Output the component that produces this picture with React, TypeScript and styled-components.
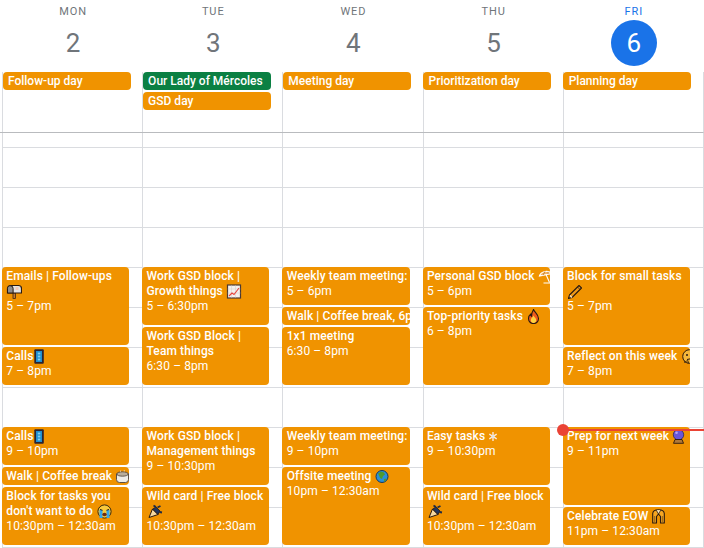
import React from "react";
import styled, { createGlobalStyle } from "styled-components";

const Global = createGlobalStyle`
  html, body { margin: 0; padding: 0; background: #fff; }
  body { font-family: Roboto, "Liberation Sans", sans-serif; }
`;

const Page = styled.div`
  width: 704px;
  height: 548px;
  overflow: hidden;
  background: #fff;
`;

const Columns = styled.div`
  display: grid;
  grid-template-columns: repeat(5, 140.2px);
  padding-left: 1.95px;
  width: 702.95px;
  box-sizing: border-box;
`;

const HeaderRow = styled(Columns)`
  height: 72px;
`;

const HeaderCell = styled.div`
  display: flex;
  flex-direction: column;
  align-items: center;
  padding: 4px 0 0 2px;
`;

const DayName = styled.div<{ $today?: boolean }>`
  font-size: 11px;
  font-weight: 400;
  line-height: 15px;
  letter-spacing: 0.9px;
  color: ${(p) => (p.$today ? "#1a73e8" : "#70757a")};
`;

const DayNumber = styled.div<{ $today?: boolean }>`
  width: 46px;
  height: 46px;
  margin-top: 1px;
  border-radius: 50%;
  display: flex;
  align-items: center;
  justify-content: center;
  font-size: 26px;
  color: ${(p) => (p.$today ? "#fff" : "#70757a")};
  background: ${(p) => (p.$today ? "#1a73e8" : "transparent")};
`;

const AllDayRow = styled(Columns)`
  height: 61px;
  border-right: 1px solid #dadce0;
  border-bottom: 1px solid #b9bbbe;
  width: 704px;
`;

const AllDayCell = styled.div`
  display: flex;
  flex-direction: column;
  gap: 2px;
  padding-left: 0.6px;
  background: linear-gradient(90deg, #dadce0 1px, transparent 1px);
`;

const Chip = styled.div<{ $green?: boolean }>`
  width: 128px;
  height: 18px;
  box-sizing: border-box;
  padding-left: 5.4px;
  border-radius: 4px;
  background: ${(p) => (p.$green ? "#0b8043" : "#f09300")};
  color: #fff;
  font-size: 12px;
  font-weight: 500;
  line-height: 18px;
  white-space: nowrap;
  overflow: hidden;
`;

const TimeGrid = styled(Columns)`
  height: 415px;
  width: 704px;
  border-right: 1px solid #dadce0;
`;

const DayColumn = styled.div`
  position: relative;
  display: grid;
  grid-template-rows: 14px repeat(21, 20px);
  background:
    linear-gradient(90deg, #dadce0 1px, transparent 1px) 0 0 / 100% 100% no-repeat,
    linear-gradient(#dadce0 1px, transparent 1px) 0 14px / 100% 40px repeat-y;
`;

const EventCard = styled.div<{ $start: number; $span: number }>`
  grid-row: ${(p) => p.$start} / span ${(p) => p.$span};
  margin: 0 13px 2px 0;
  padding: 2px 0 0 4.4px;
  box-sizing: border-box;
  border-radius: 4px;
  background: #f09300;
  color: #fff;
  font-size: 12px;
  line-height: 15px;
  overflow: hidden;
`;

const EventTitle = styled.div<{ $nowrap: boolean }>`
  font-weight: 500;
  letter-spacing: 0.1px;
  white-space: ${(p) => (p.$nowrap ? "nowrap" : "normal")};
`;

const EventTime = styled.div`
  font-weight: 400;
  letter-spacing: 0.1px;
  white-space: nowrap;
`;

const NowDot = styled.div`
  position: absolute;
  left: -6px;
  top: 291px;
  width: 12px;
  height: 12px;
  border-radius: 50%;
  background: #ea4335;
`;

const NowLine = styled.div`
  position: absolute;
  left: 0;
  right: -2px;
  top: 296px;
  height: 2px;
  background: #ea4335;
`;

const Glyph = styled.svg`
  display: inline-block;
  width: 16px;
  height: 15px;
  vertical-align: top;
`;

const ink = "#2a1a10";
const icons: Record<string, React.ReactNode> = {
  mailbox: (
    <>
      <rect x="6.500" y="9" width="2.500" height="5.500" fill="#c77a2c" stroke={ink} strokeWidth="0.7" />
      <path d="M1 4.500a3 3 0 0 1 3-3h8a3 3 0 0 1 3 3V9H1z" fill="#e4e4e4" stroke={ink} strokeWidth="1.200" />
      <path d="M4 1.800a2.600 2.600 0 0 1 2.600 2.600V9H1V4.400a2.600 2.600 0 0 1 3-2.600z" fill="#8d8d8d" stroke={ink} strokeWidth="1" />
      <rect x="9" y="3" width="3" height="3" fill="#f2c9b8" />
    </>
  ),
  phone: (
    <>
      <rect x="0.800" y="0.300" width="9.500" height="14.500" rx="1" fill="#2c2430" />
      <rect x="2.500" y="2" width="6" height="11" fill="#1f8fd0" />
      <rect x="4.300" y="3.600" width="2.500" height="1.800" fill="#7fd0f0" />
      <rect x="4.300" y="6.600" width="2.500" height="1.800" fill="#7fd0f0" />
      <rect x="4.300" y="9.600" width="2.500" height="1.800" fill="#7fd0f0" />
    </>
  ),
  chart: (
    <>
      <rect x="1" y="1" width="13" height="13" fill="#f4f1ee" stroke="#4a3a34" strokeWidth="1.200" />
      <path d="M1 5h13M1 9h13M5 1v13M9 1v13" stroke="#c9c4c0" strokeWidth="0.400" />
      <path d="M2.500 12l3-3 2 1.500 5-6.500" fill="none" stroke="#e8453c" strokeWidth="1.100" />
    </>
  ),
  umbrella: (
    <>
      <path d="M1 7C2 3 8 .5 14 4.500z" fill="#f6b35c" stroke="#fff" strokeWidth="1.200" />
      <path d="M7.500 5.500l3.500 8" stroke="#fff" strokeWidth="1.100" fill="none" />
      <path d="M4.500 6.200l2-3.800M9.500 5.200V2.800" stroke="#9a5a18" strokeWidth="0.600" />
      <path d="M5 14h8" stroke="#fff" strokeWidth="1" />
    </>
  ),
  fire: (
    <>
      <path d="M7 .5c1 3 5 4.600 5 9 0 3.300-2.400 5-5 5s-5-1.700-5-5c0-2 1-3.600 2.100-4.400 0 1.200.5 2 1 2.200C5 4.800 5.800 2.500 7 .5z" fill="#ef5a1c" stroke={ink} strokeWidth="1.100" />
      <path d="M7 6.500c.7 1.700 2.700 2.600 2.700 4.800 0 1.700-1.200 2.700-2.700 2.700s-2.700-1-2.700-2.700c0-2.200 2-3.100 2.700-4.800z" fill="#ffd23e" />
    </>
  ),
  pencil: (
    <>
      <path d="M11.500 1.500l2.500 2.500-9.500 9.500-3.500 1 1-3.500z" fill="#f09a1a" stroke={ink} strokeWidth="1.100" strokeLinejoin="round" />
      <path d="M2.500 11.500l2 2" stroke="#f5e0c0" strokeWidth="1.200" />
      <path d="M10 3l2.500 2.500" stroke={ink} strokeWidth="0.800" />
    </>
  ),
  thinking: (
    <>
      <circle cx="8" cy="7.500" r="6.800" fill="#f4b73a" stroke={ink} strokeWidth="1" />
      <circle cx="5.500" cy="6" r="1" fill={ink} />
      <circle cx="10" cy="6" r="1" fill={ink} />
      <path d="M5.500 10.500l4-.8" stroke={ink} strokeWidth="1" />
      <path d="M2.500 13l4-1.500 .5 2.500z" fill="#e69a20" stroke={ink} strokeWidth="0.700" />
    </>
  ),
  coffee: (
    <>
      <path d="M1 5h12v5.500a3 3 0 0 1-3 3H4a3 3 0 0 1-3-3z" fill="#eeece8" stroke="#5c5148" strokeWidth="1" />
      <ellipse cx="7" cy="5" rx="5.800" ry="2.200" fill="#b9ad9c" stroke="#4a3f36" strokeWidth="0.800" />
      <path d="M5 1.500c.8.500-.5 1 .3 1.500M8.500 1c.8.500-.5 1 .3 1.500" fill="none" stroke="#eee" strokeWidth="0.800" />
    </>
  ),
  crying: (
    <>
      <circle cx="8" cy="7.500" r="6.600" fill="#f8c93c" stroke="#3a2a10" strokeWidth="1" />
      <path d="M3 6h3v8H3zM10 6h3v8h-3z" fill="#36a5e8" />
      <path d="M3.500 5.500l2.500.8M12.500 5.500l-2.500.8" stroke={ink} strokeWidth="1" />
      <ellipse cx="8" cy="10.500" rx="2.200" ry="1.800" fill="#6b2a10" />
    </>
  ),
  popper: (
    <>
      <path d="M1.500 13.500L5 5l5.500 5.500z" fill="#f5d9a0" stroke={ink} strokeWidth="1" strokeLinejoin="round" />
      <path d="M5 5l5.500 5.500 2-3.500-4-4z" fill="#21365e" stroke={ink} strokeWidth="0.800" />
      <path d="M6 1.500l2.500 1.500M10 3.500l3-1.500M12 8l2.500.5" stroke="#1f2b46" strokeWidth="1.800" />
    </>
  ),
  snowflake: (
    <>
      <g stroke="#fbe9dc" strokeWidth="1.400" fill="none">
        <path d="M4.500 3v9M.8 5.200l7.400 4.600M8.200 5.200L.8 9.800" />
      </g>
      <circle cx="4.500" cy="7.500" r="1.400" fill="#dfe3e6" />
    </>
  ),
  globe: (
    <>
      <circle cx="6.500" cy="7.500" r="6" fill="#2a8fd8" stroke="#173a5c" strokeWidth="1" />
      <path d="M2.500 4.500l3-2 3 1 1 2-2 1.500-1 3-2-1-1-2.500zM8.500 10l2.500-.5-1 2.500-1.500 .5z" fill="#4f9a2e" />
    </>
  ),
  ball: (
    <>
      <circle cx="6" cy="5.800" r="5.200" fill="#6a55d8" stroke="#2c2560" strokeWidth="0.800" />
      <circle cx="4" cy="3.800" r="1.300" fill="#b5a8f5" />
      <path d="M2.500 10.500h7l1.500 3.800H1z" fill="#b0793a" stroke={ink} strokeWidth="0.900" />
    </>
  ),
  gi: (
    <>
      <path d="M1.200 4.500C1.500 2 4 .8 7 .8s5.500 1.200 5.800 3.700V14H9V7.500L7 5 5 7.500V14H1.200z" fill="#f5a623" stroke={ink} strokeWidth="1.100" strokeLinejoin="round" />
      <path d="M4.800 1.200L7 5l2.200-3.800" fill="#fff1d0" stroke={ink} strokeWidth="0.800" />
      <path d="M3.200 7v6M10.800 7v6" stroke={ink} strokeWidth="0.500" />
    </>
  ),
};

const Emoji = ({ name }: { name: string }) => <Glyph viewBox="0 0 15 15">{icons[name]}</Glyph>;

type Ev = { title: string; emoji?: string; tight?: boolean; time?: string; start: number; span: number };

const days: { name: string; date: number; today?: boolean; chips: { label: string; green?: boolean }[]; events: Ev[] }[] = [
  {
    name: "MON",
    date: 2,
    chips: [{ label: "Follow-up day" }],
    events: [
      { title: "Emails | Follow-ups", emoji: "mailbox", time: "5 – 7pm", start: 8, span: 4 },
      { title: "Calls", emoji: "phone", tight: true, time: "7 – 8pm", start: 12, span: 2 },
      { title: "Calls", emoji: "phone", tight: true, time: "9 – 10pm", start: 16, span: 2 },
      { title: "Walk | Coffee break", emoji: "coffee", start: 18, span: 1 },
      { title: "Block for tasks you don't want to do", emoji: "crying", time: "10:30pm – 12:30am", start: 19, span: 3 },
    ],
  },
  {
    name: "TUE",
    date: 3,
    chips: [{ label: "Our Lady of Mércoles", green: true }, { label: "GSD day" }],
    events: [
      { title: "Work GSD block | Growth things", emoji: "chart", time: "5 – 6:30pm", start: 8, span: 3 },
      { title: "Work GSD Block | Team things", time: "6:30 – 8pm", start: 11, span: 3 },
      { title: "Work GSD block | Management things", time: "9 – 10:30pm", start: 16, span: 3 },
      { title: "Wild card | Free block", emoji: "popper", time: "10:30pm – 12:30am", start: 19, span: 3 },
    ],
  },
  {
    name: "WED",
    date: 4,
    chips: [{ label: "Meeting day" }],
    events: [
      { title: "Weekly team meeting:", time: "5 – 6pm", start: 8, span: 2 },
      { title: "Walk | Coffee break, 6pm", start: 10, span: 1 },
      { title: "1x1 meeting", time: "6:30 – 8pm", start: 11, span: 3 },
      { title: "Weekly team meeting:", time: "9 – 10pm", start: 16, span: 2 },
      { title: "Offsite meeting", emoji: "globe", time: "10pm – 12:30am", start: 18, span: 4 },
    ],
  },
  {
    name: "THU",
    date: 5,
    chips: [{ label: "Prioritization day" }],
    events: [
      { title: "Personal GSD block", emoji: "umbrella", time: "5 – 6pm", start: 8, span: 2 },
      { title: "Top-priority tasks", emoji: "fire", time: "6 – 8pm", start: 10, span: 4 },
      { title: "Easy tasks", emoji: "snowflake", time: "9 – 10:30pm", start: 16, span: 3 },
      { title: "Wild card | Free block", emoji: "popper", time: "10:30pm – 12:30am", start: 19, span: 3 },
    ],
  },
  {
    name: "FRI",
    date: 6,
    today: true,
    chips: [{ label: "Planning day" }],
    events: [
      { title: "Block for small tasks", emoji: "pencil", time: "5 – 7pm", start: 8, span: 4 },
      { title: "Reflect on this week", emoji: "thinking", time: "7 – 8pm", start: 12, span: 2 },
      { title: "Prep for next week", emoji: "ball", time: "9 – 11pm", start: 16, span: 4 },
      { title: "Celebrate EOW", emoji: "gi", time: "11pm – 12:30am", start: 20, span: 2 },
    ],
  },
];

export default function App() {
  return (
    <Page>
      <Global />
      <HeaderRow>
        {days.map((d) => (
          <HeaderCell key={d.name}>
            <DayName $today={d.today}>{d.name}</DayName>
            <DayNumber $today={d.today}>{d.date}</DayNumber>
          </HeaderCell>
        ))}
      </HeaderRow>
      <AllDayRow>
        {days.map((d) => (
          <AllDayCell key={d.name}>
            {d.chips.map((c) => (
              <Chip key={c.label} $green={c.green}>
                {c.label}
              </Chip>
            ))}
          </AllDayCell>
        ))}
      </AllDayRow>
      <TimeGrid>
        {days.map((d) => (
          <DayColumn key={d.name}>
            {d.events.map((e) => (
              <EventCard key={e.start} $start={e.start} $span={e.span}>
                <EventTitle $nowrap={e.span <= 2}>
                  {e.title}
                  {e.emoji && !e.tight ? " " : ""}
                  {e.emoji && <Emoji name={e.emoji} />}
                </EventTitle>
                {e.time && <EventTime>{e.time}</EventTime>}
              </EventCard>
            ))}
            {d.today && <NowLine />}
            {d.today && <NowDot />}
          </DayColumn>
        ))}
      </TimeGrid>
    </Page>
  );
}
